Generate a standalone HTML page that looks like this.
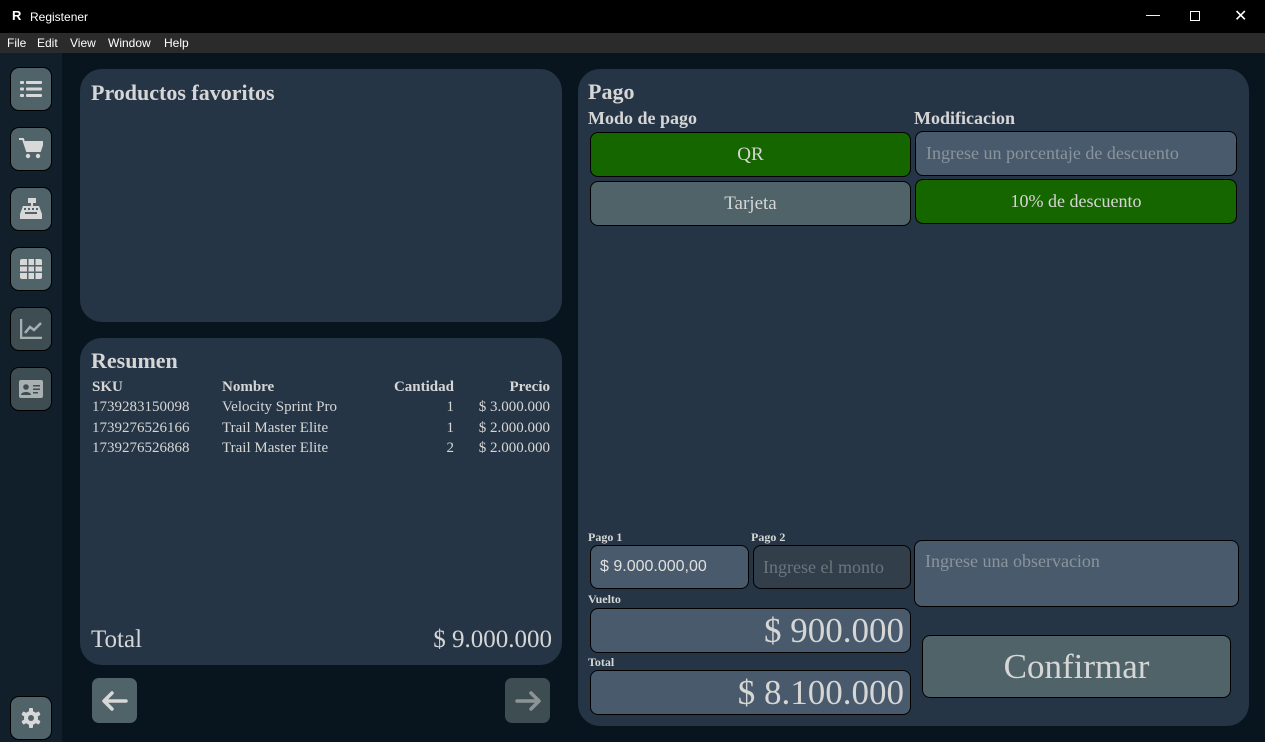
<!DOCTYPE html>
<html><head><meta charset="utf-8"><style>
*{box-sizing:border-box;margin:0;padding:0}
body{width:1265px;height:742px;background:#08151e;position:relative;overflow:hidden;font-family:"Liberation Serif",serif;color:#d6d6d6}
.a{position:absolute}
.tb{left:0;top:0;width:1265px;height:33px;background:#000;color:#fff;font-family:"Liberation Sans",sans-serif;font-size:12px}
.mb{left:0;top:33px;width:1265px;height:20px;background:#2b2b2b;color:#fff;font-family:"Liberation Sans",sans-serif;font-size:12px}
.mb span{position:absolute;top:3px}
.sb{left:0;top:53px;width:62px;height:689px;background:#111f2b}
.sbtn{position:absolute;left:10px;width:42px;height:44px;border:1px solid #000;border-radius:9px;background:#4f6369;display:flex;align-items:center;justify-content:center}
.sbtn.d{background:#3e4d52}
.pn{background:#253545;border-radius:22px}
h2{position:absolute;font-size:22px;font-weight:bold}
.btn{position:absolute;border:1px solid #000;border-radius:8px;display:flex;align-items:center;justify-content:center;font-size:19px}
.g{background:#166600}
.gr{background:#4f6369}
.in{background:#485a6b;color:#8a949c}
table{border-collapse:collapse;font-size:15px}
td{padding:0;height:20.5px}
.lab{position:absolute;font-size:12px;font-weight:bold}
</style></head><body>
<div class="a tb"><span class="a" style="left:12px;top:8px;font-weight:bold;font-size:13px">R</span><span class="a" style="left:30px;top:10px">Registener</span>
<span class="a" style="left:1146px;top:6px;font-size:14px">—</span>
<span class="a" style="left:1190px;top:11px;width:10px;height:10px;border:1px solid #fff"></span>
<span class="a" style="left:1234px;top:6px;font-size:16px">✕</span></div>
<div class="a mb"><span style="left:7px">File</span><span style="left:37px">Edit</span><span style="left:70px">View</span><span style="left:108px">Window</span><span style="left:164px">Help</span></div>
<div class="a sb">
<div class="sbtn" style="top:14px"><svg width="22" height="18" viewBox="0 0 22 18" fill="#d8d8d8"><rect x="0" y="1" width="4" height="3" rx="1"/><rect x="0" y="7.5" width="4" height="3" rx="1"/><rect x="0" y="14" width="4" height="3" rx="1"/><rect x="6" y="1" width="16" height="3" rx="1"/><rect x="6" y="7.5" width="16" height="3" rx="1"/><rect x="6" y="14" width="16" height="3" rx="1"/></svg></div>
<div class="sbtn" style="top:74px"><svg width="24" height="22" viewBox="0 0 24 22" fill="#d8d8d8"><path d="M0 1h4l4 12h13l3-9H6" stroke="#d8d8d8" stroke-width="2" fill="none"/><path d="M6 4h18l-3 9H8z"/><circle cx="9" cy="18" r="2.2"/><circle cx="19" cy="18" r="2.2"/></svg></div>
<div class="sbtn" style="top:134px"><svg width="22" height="22" viewBox="0 0 22 22" fill="#d8d8d8"><rect x="8" y="0" width="8" height="5"/><rect x="11" y="5" width="2" height="3"/><path d="M3 8h16l3 8v5H0v-5z"/><g fill="#4f6369"><rect x="4" y="10" width="2" height="2"/><rect x="8" y="10" width="2" height="2"/><rect x="12" y="10" width="2" height="2"/><rect x="16" y="10" width="2" height="2"/><rect x="5" y="14" width="12" height="2"/></g></svg></div>
<div class="sbtn" style="top:194px"><svg width="22" height="20" viewBox="0 0 22 20" fill="#d8d8d8"><rect width="22" height="20" rx="2"/><g fill="#4f6369"><rect x="7" y="0" width="1.5" height="20"/><rect x="14" y="0" width="1.5" height="20"/><rect x="0" y="6" width="22" height="1.5"/><rect x="0" y="12.5" width="22" height="1.5"/></g></svg></div>
<div class="sbtn d" style="top:254px"><svg width="22" height="20" viewBox="0 0 22 20" fill="none" stroke="#a9b0b2" stroke-width="2.5"><path d="M1 0v19h21"/><path d="M5 14l5-6 4 3 7-7"/></svg></div>
<div class="sbtn d" style="top:314px"><svg width="24" height="18" viewBox="0 0 24 18" fill="#a9b0b2"><rect width="24" height="18" rx="2"/><g fill="#3e4d52"><circle cx="7" cy="7" r="2.8"/><path d="M2 15c0-4 10-4 10 0z"/><rect x="14" y="5" width="7" height="1.5"/><rect x="14" y="8.5" width="7" height="1.5"/><rect x="14" y="12" width="5" height="1.5"/></g></svg></div>
<div class="sbtn" style="top:643px;background:#4f6369"><svg width="20" height="20" viewBox="0 0 20 20"><g fill="#d8d8d8"><circle cx="10" cy="10" r="7"/><rect x="8" y="0" width="4" height="20" rx="1"/><rect x="8" y="0" width="4" height="20" rx="1" transform="rotate(60 10 10)"/><rect x="8" y="0" width="4" height="20" rx="1" transform="rotate(120 10 10)"/></g><circle cx="10" cy="10" r="3" fill="#4f6369"/></svg></div>
</div>
<div class="a pn" style="left:80px;top:69px;width:482px;height:253px"><h2 style="left:11px;top:11px">Productos favoritos</h2></div>
<div class="a pn" style="left:80px;top:338px;width:482px;height:327px"><h2 style="left:11px;top:10px">Resumen</h2>
<table class="a" style="left:12px;top:39px;width:458px">
<tr style="font-weight:bold"><td>SKU</td><td>Nombre</td><td style="text-align:right">Cantidad</td><td style="text-align:right">Precio</td></tr>
<tr><td style="width:130px">1739283150098</td><td style="width:150px">Velocity Sprint Pro</td><td style="text-align:right;width:82px">1</td><td style="text-align:right">$ 3.000.000</td></tr>
<tr><td>1739276526166</td><td>Trail Master Elite</td><td style="text-align:right">1</td><td style="text-align:right">$ 2.000.000</td></tr>
<tr><td>1739276526868</td><td>Trail Master Elite</td><td style="text-align:right">2</td><td style="text-align:right">$ 2.000.000</td></tr>
</table>
<span class="a" style="left:11px;top:288px;font-size:25px">Total</span><span class="a" style="right:10px;top:288px;font-size:25px">$ 9.000.000</span></div>
<div class="a" style="left:92px;top:678px;width:45px;height:45px;background:#4f6369;border-radius:7px;display:flex;align-items:center;justify-content:center"><svg width="26" height="20" viewBox="0 0 26 20" fill="none" stroke="#d8d8d8" stroke-width="3.5" stroke-linecap="round" stroke-linejoin="round"><path d="M24 10H3M10 2L2 10l8 8"/></svg></div>
<div class="a" style="left:505px;top:678px;width:45px;height:45px;background:#3e4d52;border-radius:7px;display:flex;align-items:center;justify-content:center"><svg width="26" height="20" viewBox="0 0 26 20" fill="none" stroke="#8d9496" stroke-width="3.5" stroke-linecap="round" stroke-linejoin="round"><path d="M2 10h21M16 2l8 8-8 8"/></svg></div>
<div class="a pn" style="left:578px;top:69px;width:671px;height:657px">
<h2 style="left:10px;top:10px">Pago</h2>
<span class="a" style="left:10px;top:39px;font-size:18px;font-weight:bold">Modo de pago</span>
<span class="a" style="left:336px;top:39px;font-size:18px;font-weight:bold">Modificacion</span>
<div class="btn g" style="left:12px;top:63px;width:321px;height:45px">QR</div>
<div class="btn gr" style="left:12px;top:112px;width:321px;height:45px">Tarjeta</div>
<div class="btn in" style="left:337px;top:62px;width:322px;height:45px;justify-content:flex-start;padding-left:10px;font-size:18px">Ingrese un porcentaje de descuento</div>
<div class="btn g" style="left:337px;top:110px;width:322px;height:45px;font-size:18px">10% de descuento</div>
<span class="lab" style="left:10px;top:461px">Pago 1</span><span class="lab" style="left:173px;top:461px">Pago 2</span>
<div class="btn in" style="left:12px;top:476px;width:159px;height:44px;justify-content:flex-start;padding-left:9px;color:#e0e0e0;font-family:'Liberation Sans',sans-serif;font-size:16px">$ 9.000.000,00</div>
<div class="btn" style="left:175px;top:476px;width:158px;height:44px;background:#323f4a;color:#6b757c;font-size:18px;justify-content:flex-start;padding-left:9px">Ingrese el monto</div>
<div class="btn in" style="left:336px;top:471px;width:325px;height:67px;align-items:flex-start;justify-content:flex-start;padding:10px;font-size:18px">Ingrese una observacion</div>
<span class="lab" style="left:10px;top:523px">Vuelto</span>
<div class="btn in" style="left:12px;top:539px;width:321px;height:45px;justify-content:flex-end;padding-right:6px;color:#d6d6d6;font-size:35px">$ 900.000</div>
<span class="lab" style="left:10px;top:586px">Total</span>
<div class="btn in" style="left:12px;top:601px;width:321px;height:45px;justify-content:flex-end;padding-right:6px;color:#d6d6d6;font-size:35px">$ 8.100.000</div>
<div class="btn gr" style="left:344px;top:566px;width:309px;height:63px;font-size:35px">Confirmar</div>
</div>
</body></html>
